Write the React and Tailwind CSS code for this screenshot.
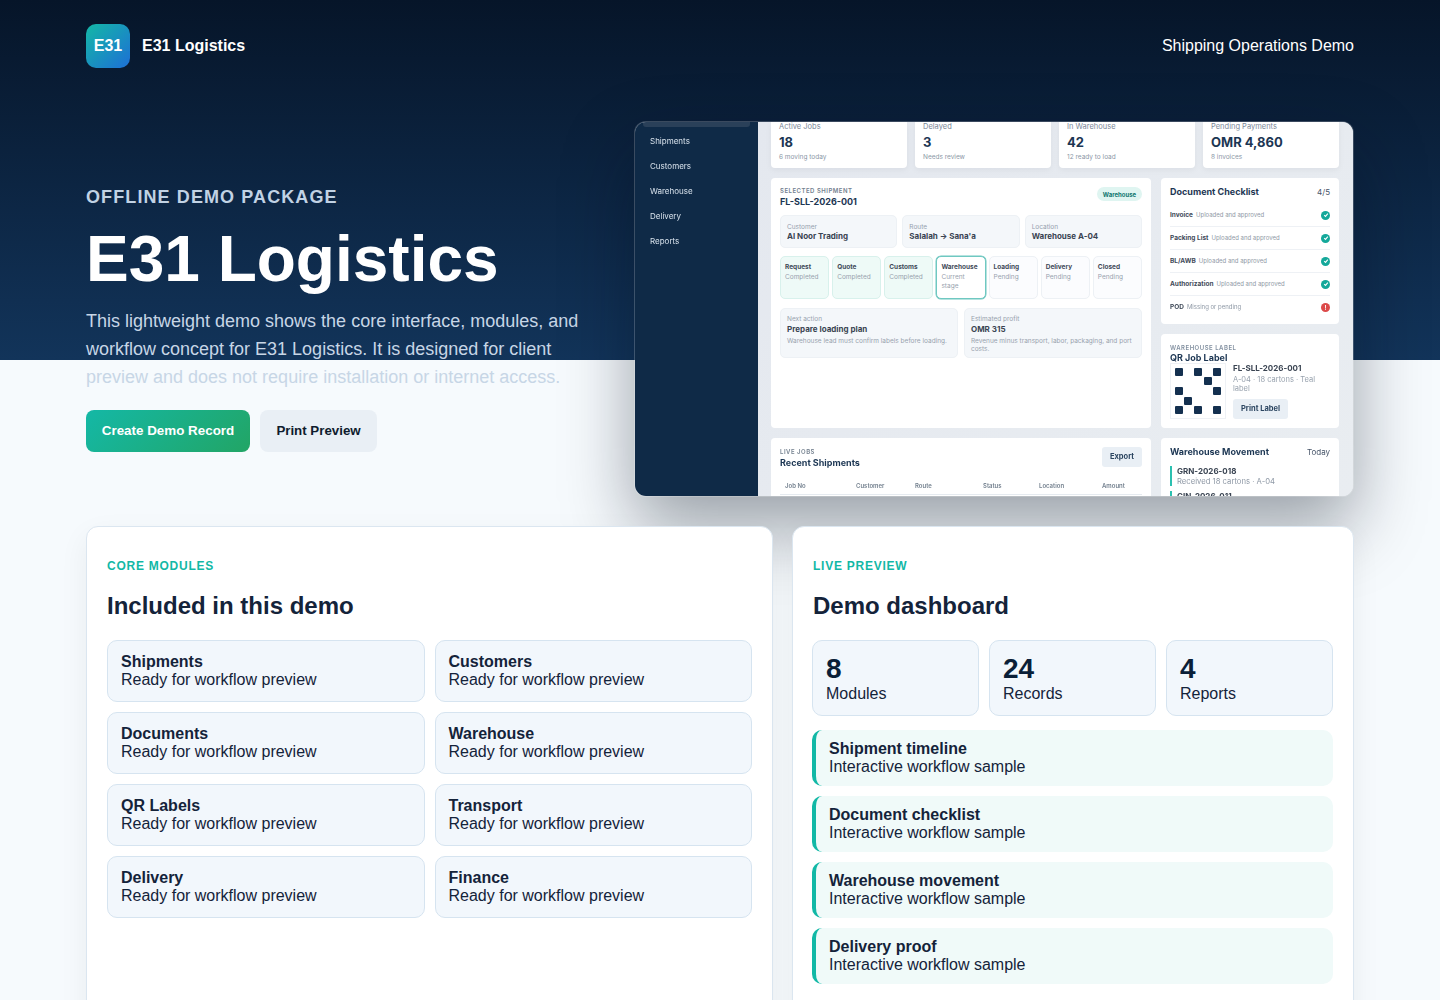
const modules = ["Shipments", "Customers", "Documents", "Warehouse", "QR Labels", "Transport", "Delivery", "Finance"];
const totals = [
  { value: "8", label: "Modules" },
  { value: "24", label: "Records" },
  { value: "4", label: "Reports" },
];
const samples = ["Shipment timeline", "Document checklist", "Warehouse movement", "Delivery proof"];

const sideLinks = ["Shipments", "Customers", "Warehouse", "Delivery", "Reports"];
const stats = [
  { label: "Active Jobs", value: "18", note: "6 moving today" },
  { label: "Delayed", value: "3", note: "Needs review" },
  { label: "In Warehouse", value: "42", note: "12 ready to load" },
  { label: "Pending Payments", value: "OMR 4,860", note: "8 invoices" },
];
const infos = [
  { label: "Customer", value: "Al Noor Trading" },
  { label: "Route", value: "Salalah → Sana'a" },
  { label: "Location", value: "Warehouse A-04" },
];
const steps = [
  { name: "Request", note: "Completed", state: "done" },
  { name: "Quote", note: "Completed", state: "done" },
  { name: "Customs", note: "Completed", state: "done" },
  { name: "Warehouse", note: "Current stage", state: "current" },
  { name: "Loading", note: "Pending", state: "pending" },
  { name: "Delivery", note: "Pending", state: "pending" },
  { name: "Closed", note: "Pending", state: "pending" },
];
const stepStyles = {
  done: "bg-[#eefaf7] border-[#d8f1ec]",
  current: "bg-white border-[#6fc8c1] shadow-[0_0_0_0.5px_#6fc8c1]",
  pending: "bg-[#fbfcfe] border-[#edf1f5]",
};
const checklist = [
  { name: "Invoice", note: "Uploaded and approved", ok: true },
  { name: "Packing List", note: "Uploaded and approved", ok: true },
  { name: "BL/AWB", note: "Uploaded and approved", ok: true },
  { name: "Authorization", note: "Uploaded and approved", ok: true },
  { name: "POD", note: "Missing or pending", ok: false },
];
const qrCells = [0, 2, 4, 8, 10, 14, 16, 20, 22, 24];
const columns = [
  { name: "Job No", width: "w-[71px]" },
  { name: "Customer", width: "w-[59px]" },
  { name: "Route", width: "w-[68px]" },
  { name: "Status", width: "w-[56px]" },
  { name: "Location", width: "w-[63px]" },
  { name: "Amount", width: "" },
];

const StatusDot = ({ ok }) => (
  <span className={`w-[9px] h-[9px] rounded-full grid place-items-center ${ok ? "bg-[#14a89a]" : "bg-[#dc4a4a]"}`}>
    {ok ? (
      <svg width="6" height="6" viewBox="0 0 10 10" fill="none" stroke="white" strokeWidth="1.8">
        <path d="M2 5.2 4.2 7.4 8 2.8" />
      </svg>
    ) : (
      <span className="text-white text-[6px] leading-none font-bold">!</span>
    )}
  </span>
);

const DashboardShot = () => (
  <div className="w-[720px] h-[376px] mt-[29px] rounded-[12px] overflow-hidden flex bg-[#e6eaf0] bg-clip-padding border border-white/20 shadow-[0_30px_70px_rgba(2,14,30,0.38)] font-['Inter',sans-serif]">
    <div className="w-[123px] shrink-0 bg-[#0f2a47] px-2 blur-[0.35px]">
      <div className="h-[5px] rounded-b-[3px] bg-[#2a4059]" />
      <div className="mt-[1px] flex flex-col">
        {sideLinks.map((link) => (
          <div key={link} className="h-[25px] pl-[7px] flex items-center text-[8px] text-[#d8e2ec]">{link}</div>
        ))}
      </div>
    </div>

    <div className="flex-1 pl-[13px] pr-[14px] bg-[linear-gradient(135deg,#e4e8ef,#e9edf1)] blur-[0.35px]">
      <div className="grid grid-cols-4 gap-2">
        {stats.map((stat) => (
          <div key={stat.label} className="h-[46px] bg-white rounded-b-[4px] px-2 shadow-[0_2px_6px_rgba(15,23,42,0.05)]">
            <div className="text-[7.5px] leading-[10px] text-[#7a8798]">{stat.label}</div>
            <div className="text-[13px] leading-[20px] font-bold text-[#1c3653]">{stat.value}</div>
            <div className="mt-[1px] text-[6.5px] leading-[9px] text-[#8b97a6]">{stat.note}</div>
          </div>
        ))}
      </div>

      <div className="mt-[10px] grid grid-cols-[380px_178px] gap-[10px]">
        <div className="h-[250px] bg-white rounded-[4px] px-[9px] pt-[9px]">
          <div className="flex justify-between">
            <div>
              <div className="text-[6px] leading-[8px] font-semibold tracking-[0.5px] text-[#74818f]">SELECTED SHIPMENT</div>
              <div className="text-[9px] leading-[14px] font-bold text-[#1c3653]">FL-SLL-2026-001</div>
            </div>
            <span className="h-[14px] w-[45px] rounded-full bg-[#dff5f1] text-[6px] font-bold text-[#0f766e] grid place-items-center">Warehouse</span>
          </div>
          <div className="mt-[6px] grid grid-cols-3 gap-[5px]">
            {infos.map((info) => (
              <div key={info.label} className="h-[33px] rounded-[5px] bg-[#f4f7fa] border border-[#edf1f5] px-[6px] pt-[7px]">
                <div className="text-[6.5px] leading-[8px] text-[#94a0ae]">{info.label}</div>
                <div className="text-[8px] leading-[11px] font-bold text-[#3a4452]">{info.value}</div>
              </div>
            ))}
          </div>
          <div className="mt-2 grid grid-cols-7 gap-[3px]">
            {steps.map((step) => (
              <div key={step.name} className={`h-[43px] rounded-[5px] border px-[4px] pt-[6px] ${stepStyles[step.state]}`}>
                <div className="text-[6.5px] leading-[9px] font-bold text-[#3f4a59]">{step.name}</div>
                <div className="mt-[1px] text-[6.5px] leading-[8.5px] text-[#98a2ae]">{step.note}</div>
              </div>
            ))}
          </div>
          <div className="mt-[9px] grid grid-cols-2 gap-[6px]">
            <div className="h-[50px] rounded-[5px] bg-[#f4f7fa] border border-[#edf1f5] px-[6px] pt-[6px]">
              <div className="text-[6.5px] leading-[8px] text-[#98a2ae]">Next action</div>
              <div className="text-[8px] leading-[13px] font-bold text-[#3a4452]">Prepare loading plan</div>
              <div className="mt-[1px] text-[6.5px] leading-[9px] text-[#98a2ae]">Warehouse lead must confirm labels before loading.</div>
            </div>
            <div className="h-[50px] rounded-[5px] bg-[#f4f7fa] border border-[#edf1f5] px-[6px] pt-[6px]">
              <div className="text-[6.5px] leading-[8px] text-[#98a2ae]">Estimated profit</div>
              <div className="text-[8px] leading-[13px] font-bold text-[#3a4452]">OMR 315</div>
              <div className="mt-[1px] text-[6.5px] leading-[8px] text-[#98a2ae]">Revenue minus transport, labor, packaging, and port costs.</div>
            </div>
          </div>
        </div>

        <div className="flex flex-col gap-[10px]">
          <div className="h-[146px] bg-white rounded-[4px] px-[9px] pt-[8px]">
            <div className="flex justify-between items-center">
              <span className="text-[9px] leading-[12px] font-bold text-[#1c3653]">Document Checklist</span>
              <span className="text-[8px] text-[#475569]">4/5</span>
            </div>
            <div className="mt-[6px]">
              {checklist.map((doc) => (
                <div key={doc.name} className="h-[23px] flex items-center justify-between border-b border-[#eef1f5] last:border-b-0">
                  <span className="text-[6px]">
                    <b className="text-[6.5px] font-bold text-[#3f4a59]">{doc.name}</b>
                    <span className="ml-[3px] text-[#8f99a6]">{doc.note}</span>
                  </span>
                  <StatusDot ok={doc.ok} />
                </div>
              ))}
            </div>
          </div>

          <div className="h-[94px] bg-white rounded-[4px] px-[9px] pt-[10px]">
            <div className="text-[6px] leading-[8px] font-semibold tracking-[0.5px] text-[#8290a0]">WAREHOUSE LABEL</div>
            <div className="text-[9px] leading-[11px] font-bold text-[#1c3653]">QR Job Label</div>
            <div className="flex gap-[7px]">
              <div className="w-[56px] h-[56px] border border-[#eef1f5] p-[3px] grid grid-cols-5 grid-rows-5 place-items-center">
                {Array.from({ length: 25 }, (_, i) => (
                  <span key={i} className={qrCells.includes(i) ? "w-2 h-2 rounded-[1px] bg-[#14304f]" : ""} />
                ))}
              </div>
              <div className="flex-1">
                <div className="text-[8px] leading-[10px] font-bold text-[#3a4452]">FL-SLL-2026-001</div>
                <div className="mt-[2px] text-[7.5px] leading-[9px] text-[#98a2ae]">A-04 · 18 cartons · Teal label</div>
                <div className="mt-[6px] w-[55px] h-[20px] rounded-[3px] bg-[#e9eff5] grid place-items-center text-[7.5px] font-bold text-[#2b4560]">Print Label</div>
              </div>
            </div>
          </div>
        </div>

        <div className="h-[60px] bg-white rounded-t-[4px] px-[9px] pt-[10px]">
          <div className="flex justify-between">
            <div>
              <div className="text-[6px] leading-[8px] font-semibold tracking-[0.5px] text-[#74818f]">LIVE JOBS</div>
              <div className="text-[9px] leading-[14px] font-bold text-[#1c3653]">Recent Shipments</div>
            </div>
            <span className="-mt-px w-[40px] h-[20px] rounded-[3px] bg-[#e9eff5] grid place-items-center text-[7.5px] font-bold text-[#2b4560]">Export</span>
          </div>
          <div className="mt-[11px] pl-[5px] pb-[4px] flex border-b border-[#e6ebf0] text-[6px] font-semibold text-[#74818f]">
            {columns.map((col) => (
              <span key={col.name} className={col.width}>{col.name}</span>
            ))}
          </div>
        </div>

        <div className="h-[60px] overflow-hidden bg-white rounded-t-[4px] px-[9px] pt-[8px]">
          <div className="flex justify-between items-center">
            <span className="text-[9px] leading-[12px] font-bold text-[#1c3653]">Warehouse Movement</span>
            <span className="text-[8px] text-[#475569]">Today</span>
          </div>
          <div className="mt-[8px] border-l-2 border-[#2cc0b0] pl-[5px] h-[20px]">
            <div className="text-[8px] leading-[10px] font-bold text-[#3a4452]">GRN-2026-018</div>
            <div className="text-[7.7px] leading-[11px] text-[#8f99a6]">Received 18 cartons · A-04</div>
          </div>
          <div className="mt-[5px] border-l-2 border-[#2cc0b0] pl-[5px] h-[20px]">
            <div className="text-[8px] leading-[10px] font-bold text-[#3a4452]">GIN-2026-011</div>
          </div>
        </div>
      </div>
    </div>
  </div>
);

const Eyebrow = ({ children }) => (
  <div className="text-[12px] leading-[14px] font-bold tracking-[0.75px] text-[#12b8a6]">{children}</div>
);

const Title = ({ children }) => (
  <h2 className="mt-[18px] text-[24px] leading-[30px] font-bold text-[#14233a]">{children}</h2>
);

export default function App() {
  return (
    <div className="h-[1000px] overflow-hidden bg-[linear-gradient(180deg,#061529_0px,#12345a_360px,#f6fafd_360px)] font-['Liberation_Sans',Arial,sans-serif]">
      <div className="w-[1268px] mx-auto">
        <header className="h-[92px] flex items-center justify-between text-white">
          <div className="flex items-center gap-3">
            <div className="w-11 h-11 rounded-[10px] bg-[linear-gradient(135deg,#14b8a6,#1d6fd6)] grid place-items-center text-base font-bold">E31</div>
            <div className="text-base font-bold">E31 Logistics</div>
          </div>
          <div className="text-base">Shipping Operations Demo</div>
        </header>

        <section className="flex justify-between">
          <div className="w-[500px] pt-[94px]">
            <div className="text-[18px] leading-[22px] font-bold tracking-[1.1px] text-[#c1d2e4]">OFFLINE DEMO PACKAGE</div>
            <h1 className="mt-[16px] text-[64px] leading-[70px] font-bold text-white">E31 Logistics</h1>
            <p className="mt-[13px] text-[18px] leading-[28px] text-[#c7d6e6]">
              This lightweight demo shows the core interface, modules, and workflow concept for E31 Logistics. It is designed for client preview and does not require installation or internet access.
            </p>
            <div className="mt-[19px] flex gap-[10px]">
              <button className="w-[164px] h-[42px] rounded-lg bg-[linear-gradient(135deg,#14b8a6,#22a565)] text-[13.4px] font-bold text-white">Create Demo Record</button>
              <button className="w-[117px] h-[42px] rounded-lg bg-[#e9eff5] text-[13.3px] font-bold text-[#0f1c2e]">Print Preview</button>
            </div>
          </div>
          <DashboardShot />
        </section>

        <section className="mt-[29px] grid grid-cols-[687px_562px] gap-[19px]">
          <div className="h-[520px] bg-white rounded-xl border border-[#dbe6f0] shadow-[0_10px_30px_rgba(15,23,42,0.06)] pt-[32px] px-5">
            <Eyebrow>CORE MODULES</Eyebrow>
            <Title>Included in this demo</Title>
            <div className="mt-[19px] grid grid-cols-2 gap-[10px]">
              {modules.map((name) => (
                <div key={name} className="h-[62px] rounded-[10px] border border-[#d6e4f0] bg-[#f2f7fc] px-[13px] pt-[12px] text-base leading-[18px] text-[#14233a]">
                  <div className="font-bold">{name}</div>
                  <div>Ready for workflow preview</div>
                </div>
              ))}
            </div>
          </div>

          <div className="h-[520px] bg-white rounded-xl border border-[#dbe6f0] shadow-[0_10px_30px_rgba(15,23,42,0.06)] pt-[32px] pl-[19px] pr-5">
            <div className="pl-px">
              <Eyebrow>LIVE PREVIEW</Eyebrow>
              <Title>Demo dashboard</Title>
            </div>
            <div className="mt-[19px] grid grid-cols-3 gap-[10px]">
              {totals.map((item) => (
                <div key={item.label} className="h-[76px] rounded-[10px] border border-[#d6e4f0] bg-[#f2f7fc] px-[13px] pt-[12px] text-[#14233a]">
                  <div className="text-[28px] leading-[32px] font-bold text-[#0b1f38]">{item.value}</div>
                  <div className="text-base leading-[18px]">{item.label}</div>
                </div>
              ))}
            </div>
            <div className="mt-[14px] flex flex-col gap-[10px]">
              {samples.map((name) => (
                <div key={name} className="h-[56px] rounded-[10px] border-l-4 border-[#12b8a6] bg-[#f0faf9] pl-[13px] pt-[10px] text-base leading-[18px] text-[#14233a]">
                  <div className="font-bold">{name}</div>
                  <div>Interactive workflow sample</div>
                </div>
              ))}
            </div>
          </div>
        </section>
      </div>
    </div>
  );
}
